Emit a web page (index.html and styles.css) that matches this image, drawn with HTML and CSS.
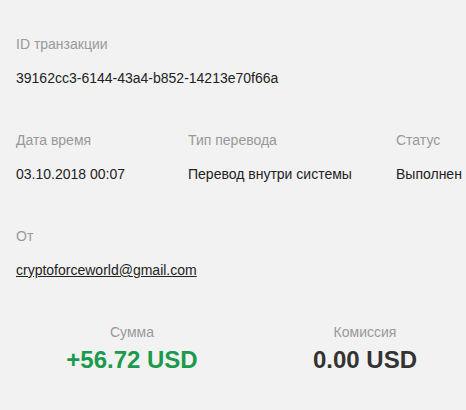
FILE: index.html
```html
<!DOCTYPE html>
<html lang="ru">
<head>
<meta charset="utf-8">
<link rel="stylesheet" href="styles.css">
</head>
<body>
<div class="page">
  <div class="section">
    <div class="label">ID транзакции</div>
    <div class="value">39162cc3-6144-43a4-b852-14213e70f66a</div>
  </div>
  <div class="section row3">
    <div class="col">
      <div class="label">Дата время</div>
      <div class="value">03.10.2018 00:07</div>
    </div>
    <div class="col">
      <div class="label">Тип перевода</div>
      <div class="value">Перевод внутри системы</div>
    </div>
    <div class="col">
      <div class="label">Статус</div>
      <div class="value">Выполнен</div>
    </div>
  </div>
  <div class="section">
    <div class="label">От</div>
    <div class="value"><a class="link" href="#">cryptoforceworld@gmail.com</a></div>
  </div>
  <div class="totals">
    <div class="total">
      <div class="label">Сумма</div>
      <div class="amount plus">+56.72 USD</div>
    </div>
    <div class="total second">
      <div class="label">Комиссия</div>
      <div class="amount">0.00 USD</div>
    </div>
  </div>
</div>
</body>
</html>
```
FILE: styles.css
```css
html, body {
  margin: 0;
  padding: 0;
  background: #f2f2f2;
}
body {
  font-family: "Liberation Sans", Arial, sans-serif;
  font-size: 14px;
  line-height: 20px;
  color: #222;
}
.page {
  padding: 34px 0 0 16px;
}
.section {
  margin-bottom: 42px;
}
.label {
  color: #999;
  margin-bottom: 14px;
}
.value {
  color: #222;
}
.row3 {
  display: grid;
  grid-template-columns: 172px 208px auto;
}
.col {
  white-space: nowrap;
}
.link {
  color: #222;
  text-decoration: underline;
}
.totals {
  display: grid;
  grid-template-columns: 232px 1fr;
  margin-top: 18px;
}
.total {
  text-align: center;
}
.total.second {
  padding-left: 16px;
}
.total .label {
  margin-bottom: 4px;
}
.amount {
  font-size: 24px;
  font-weight: bold;
  line-height: 28px;
  color: #333;
}
.amount.plus {
  color: #1a9a4b;
}
```
